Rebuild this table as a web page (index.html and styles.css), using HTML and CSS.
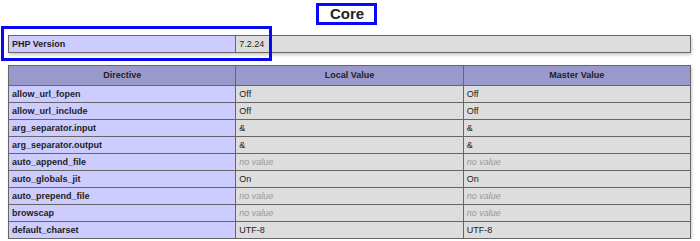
FILE: index.html
```html
<!DOCTYPE html>
<html lang="en">
<head>
    <meta charset="UTF-8">
    <title>phpinfo() - Core</title>
    <link rel="stylesheet" href="styles.css">
</head>
<body>
    <h2 class="section-title"><span class="mark-inline">Core</span></h2>

    <!-- version summary -->
    <table class="info two-col">
        <colgroup><col class="col-e"><col></colgroup>
        <tr><td class="e">PHP Version </td><td class="v">7.2.24 </td></tr>
    </table>
    <div class="mark-box"></div>

    <table class="info three-col">
        <tr class="h"><th>Directive</th><th>Local Value</th><th>Master Value</th></tr>
        <tr><td class="e">allow_url_fopen</td><td class="v">Off</td><td class="v">Off</td></tr>
        <tr><td class="e">allow_url_include</td><td class="v">Off</td><td class="v">Off</td></tr>
        <tr><td class="e">arg_separator.input</td><td class="v">&amp;</td><td class="v">&amp;</td></tr>
        <tr><td class="e">arg_separator.output</td><td class="v">&amp;</td><td class="v">&amp;</td></tr>
        <tr><td class="e">auto_append_file</td><td class="v"><i>no value</i></td><td class="v"><i>no value</i></td></tr>
        <tr><td class="e">auto_globals_jit</td><td class="v">On</td><td class="v">On</td></tr>
        <tr><td class="e">auto_prepend_file</td><td class="v"><i>no value</i></td><td class="v"><i>no value</i></td></tr>
        <tr><td class="e">browscap</td><td class="v"><i>no value</i></td><td class="v"><i>no value</i></td></tr>
        <tr><td class="e">default_charset</td><td class="v">UTF-8</td><td class="v">UTF-8</td></tr>
    </table>
</body>
</html>
```

FILE: styles.css
```css
body {
    background: #fff;
    color: #222;
    font-family: "Liberation Sans", Arial, sans-serif;
    margin: 0;
    padding: 0 9px 0 8px;
    position: relative;
}
.section-title {
    text-align: center;
    font-size: 15px;
    margin: 0;
    padding-top: 3px;
    height: 32px;
}
.mark-inline {
    display: inline-block;
    border: 3px solid #0a0af2;
    padding: 0 10px 0 11px;
    line-height: 16px;
    margin-right: 6px;
}
.mark-box {
    position: absolute;
    left: 1px;
    top: 26px;
    width: 265px;
    height: 29px;
    border: 3px solid #0a0af2;
}
.info {
    width: 100%;
    border-collapse: collapse;
    table-layout: fixed;
    box-shadow: 1px 2px 3px #ccc;
    font-size: 9px;
}
.info td, .info th {
    border: 1px solid #666;
    padding: 3px 3px;
    line-height: 10px;
    vertical-align: baseline;
    text-align: left;
}
.two-col {
    margin-bottom: 12px;
}
.col-e {
    width: 33.33%;
}
.info .h th {
    background: #99c;
    font-weight: bold;
    text-align: center;
    padding: 4px 3px 5px;
}
.e {
    background: #ccf;
    font-weight: bold;
}
.v {
    background: #ddd;
}
.v i {
    color: #999;
}
```
